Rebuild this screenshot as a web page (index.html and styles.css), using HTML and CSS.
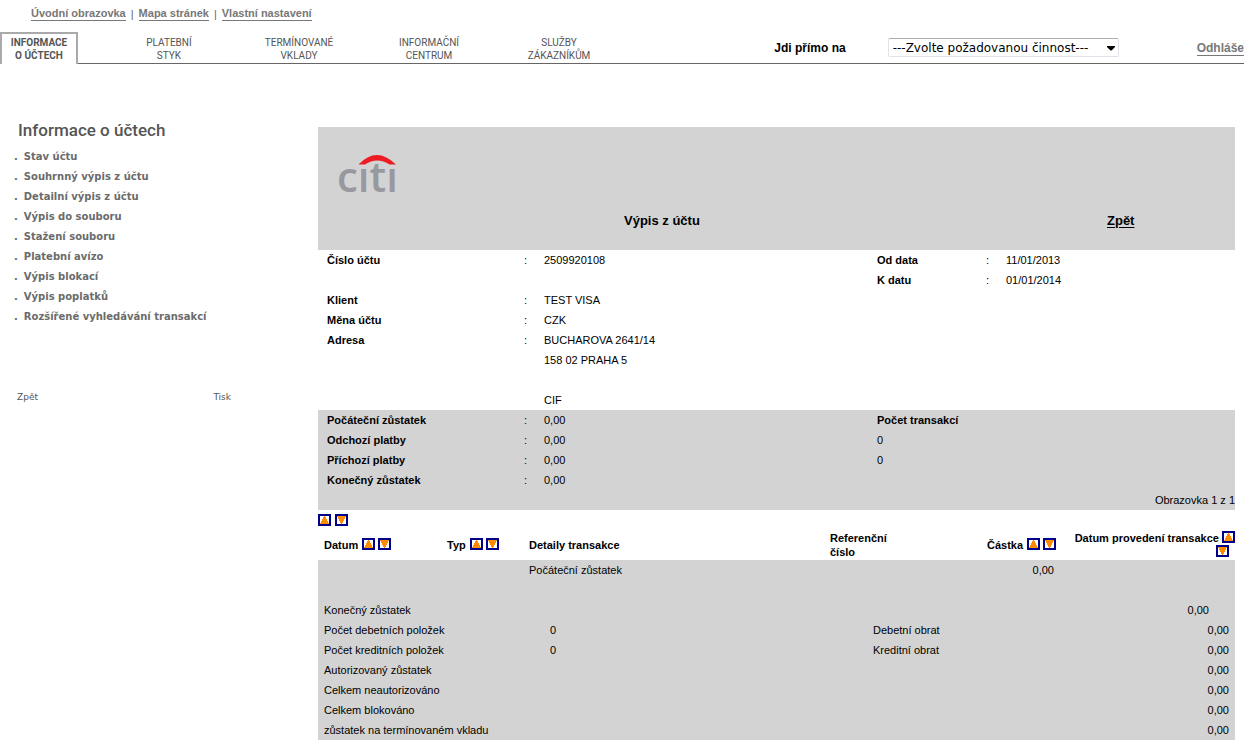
FILE: index.html
```html
<!DOCTYPE html>
<html lang="cs">
<head>
<meta charset="utf-8">
<title>Výpis z účtu</title>
<link rel="stylesheet" href="styles.css">
</head>
<body>
<svg class="defs" aria-hidden="true">
  <symbol id="up" viewBox="0 0 9 8"><path d="M4 0h1v1h1v2h1v2h1v2h1v1H0V7h1V5h1V3h1V1h1z"/></symbol>
  <symbol id="down" viewBox="0 0 9 8"><path d="M0 0h9v1H8v2H7v2H6v2H5v1H4V7H3V5H2V3H1V1H0z"/></symbol>
</svg>
<div class="quick-links"><a href="#">Úvodní obrazovka</a> | <a href="#">Mapa stránek</a> | <a href="#">Vlastní nastavení</a></div>
<header class="header">
  <nav class="tabs">
    <a class="tab tab-active" href="#">INFORMACE<br>O ÚČTECH</a>
    <a class="tab" href="#">PLATEBNÍ<br>STYK</a>
    <a class="tab" href="#">TERMÍNOVANÉ<br>VKLADY</a>
    <a class="tab" href="#">INFORMAČNÍ<br>CENTRUM</a>
    <a class="tab" href="#">SLUŽBY<br>ZÁKAZNÍKŮM</a>
  </nav>
  <div class="tools">
    <label for="jump">Jdi přímo na</label>
    <div class="select-wrap">
      <select id="jump" class="jump"><option>---Zvolte požadovanou činnost---</option></select>
      <svg class="caret" width="8" height="5" viewBox="0 0 8 5" aria-hidden="true"><path d="M0 0h8v1L4.500 4.500h-1L0 1z"/></svg>
    </div>
    <a class="logout" href="#">Odhláše</a>
  </div>
</header>
<div class="page">
  <aside class="sidebar">
    <h1 class="side-title">Informace o účtech</h1>
    <ul class="menu">
      <li><a href="#">Stav účtu</a></li>
      <li><a href="#">Souhrnný výpis z účtu</a></li>
      <li><a href="#">Detailní výpis z účtu</a></li>
      <li><a href="#">Výpis do souboru</a></li>
      <li><a href="#">Stažení souboru</a></li>
      <li><a href="#">Platební avízo</a></li>
      <li><a href="#">Výpis blokací</a></li>
      <li><a href="#">Výpis poplatků</a></li>
      <li><a href="#">Rozšířené vyhledávání transakcí</a></li>
    </ul>
    <div class="side-actions"><a href="#">Zpět</a><a href="#">Tisk</a></div>
  </aside>
  <main class="statement">
    <div class="banner">
      <svg class="logo" width="64" height="40" viewBox="0 0 64 40" role="img" aria-label="citi">
        <path class="logo-arc" d="M22.500 10.500Q40.500-8.500 60 10.500H53.500Q41 2.500 29 10.500z"/>
        <text class="logo-text" x="1" y="38">cıtı</text>
      </svg>
      <div class="banner-row">
        <h2 class="banner-title">Výpis z účtu</h2>
        <a class="back" href="#">Zpět</a>
      </div>
    </div>
    <table class="info">
      <colgroup><col class="c-label"><col class="c-colon"><col><col class="c-label2"><col class="c-colon"><col class="c-value2"></colgroup>
      <tr><th>Číslo účtu</th><td>:</td><td>2509920108</td><th>Od data</th><td>:</td><td>11/01/2013</td></tr>
      <tr><th></th><td></td><td></td><th>K datu</th><td>:</td><td>01/01/2014</td></tr>
      <tr><th>Klient</th><td>:</td><td>TEST VISA</td><td></td><td></td><td></td></tr>
      <tr><th>Měna účtu</th><td>:</td><td>CZK</td><td></td><td></td><td></td></tr>
      <tr><th>Adresa</th><td>:</td><td>BUCHAROVA 2641/14</td><td></td><td></td><td></td></tr>
      <tr><th></th><td></td><td>158 02 PRAHA 5</td><td></td><td></td><td></td></tr>
      <tr><th></th><td></td><td></td><td></td><td></td><td></td></tr>
      <tr><th></th><td></td><td>CIF</td><td></td><td></td><td></td></tr>
    </table>
    <table class="info shaded">
      <colgroup><col class="c-label"><col class="c-colon"><col><col class="c-label2"><col class="c-colon"><col class="c-value2"></colgroup>
      <tr><th>Počáteční zůstatek</th><td>:</td><td>0,00</td><th>Počet transakcí</th><td></td><td></td></tr>
      <tr><th>Odchozí platby</th><td>:</td><td>0,00</td><td>0</td><td></td><td></td></tr>
      <tr><th>Příchozí platby</th><td>:</td><td>0,00</td><td>0</td><td></td><td></td></tr>
      <tr><th>Konečný zůstatek</th><td>:</td><td>0,00</td><td></td><td></td><td></td></tr>
      <tr><td class="right" colspan="6">Obrazovka 1 z 1</td></tr>
    </table>
    <div class="sort-all">
      <button class="sort" aria-label="Vzestupně"><svg><use href="#up"/></svg></button>
      <button class="sort" aria-label="Sestupně"><svg><use href="#down"/></svg></button>
    </div>
    <table class="moves">
      <colgroup><col class="m-date"><col class="m-type"><col><col class="m-ref"><col class="m-amount"><col class="m-done"></colgroup>
      <thead>
        <tr>
          <th>Datum <button class="sort first" aria-label="Datum vzestupně"><svg><use href="#up"/></svg></button> <button class="sort" aria-label="Datum sestupně"><svg><use href="#down"/></svg></button></th>
          <th>Typ <button class="sort first" aria-label="Typ vzestupně"><svg><use href="#up"/></svg></button> <button class="sort" aria-label="Typ sestupně"><svg><use href="#down"/></svg></button></th>
          <th>Detaily transakce</th>
          <th>Referenční<br>číslo</th>
          <th>Částka <button class="sort first" aria-label="Částka vzestupně"><svg><use href="#up"/></svg></button> <button class="sort" aria-label="Částka sestupně"><svg><use href="#down"/></svg></button></th>
          <th class="done">Datum provedení transakce <button class="sort" aria-label="Datum provedení vzestupně"><svg><use href="#up"/></svg></button><br><button class="sort last" aria-label="Datum provedení sestupně"><svg><use href="#down"/></svg></button></th>
        </tr>
      </thead>
      <tbody class="shaded">
        <tr><td></td><td></td><td>Počáteční zůstatek</td><td></td><td class="amount">0,00</td><td></td></tr>
        <tr><td colspan="6"></td></tr>
      </tbody>
    </table>
    <table class="totals shaded">
      <colgroup><col class="t-label"><col class="t-count"><col><col class="t-turn"><col class="t-value"></colgroup>
      <tr><td>Konečný zůstatek</td><td></td><td></td><td></td><td class="total indent">0,00</td></tr>
      <tr><td>Počet debetních položek</td><td class="count">0</td><td></td><td>Debetní obrat</td><td class="total">0,00</td></tr>
      <tr><td>Počet kreditních položek</td><td class="count">0</td><td></td><td>Kreditní obrat</td><td class="total">0,00</td></tr>
      <tr><td>Autorizovaný zůstatek</td><td></td><td></td><td></td><td class="total">0,00</td></tr>
      <tr><td>Celkem neautorizováno</td><td></td><td></td><td></td><td class="total">0,00</td></tr>
      <tr><td>Celkem blokováno</td><td></td><td></td><td></td><td class="total">0,00</td></tr>
      <tr><td>zůstatek na termínovaném vkladu</td><td></td><td></td><td></td><td class="total">0,00</td></tr>
    </table>
  </main>
</div>
</body>
</html>
```
FILE: styles.css
```css
* { box-sizing: border-box; }
body {
  margin: 0;
  background: #fff;
  color: #000;
  font: 11px/20px "Liberation Sans", Arial, sans-serif;
}
.defs { display: none; }
a { color: inherit; text-decoration: none; }

.quick-links {
  display: flex;
  gap: 5px;
  padding: 4px 0 8px 31px;
  color: #666;
}
.quick-links a, .logout {
  align-self: center;
  border-bottom: 1px solid #777;
  color: #777;
  font-weight: bold;
  line-height: 13px;
}

.header {
  display: flex;
  border-bottom: 1px solid #666;
}
.tabs { display: flex; }
.tab {
  width: 130px;
  padding: 4px 0 1px;
  color: #555;
  font: 10px/13px Roboto, sans-serif;
  text-align: center;
}
.tab-active {
  width: 78px;
  margin: 0 26px -1px 0;
  padding: 2px 0;
  border: 2px solid #aaa;
  border-bottom: 0;
  background: #fff;
  font-weight: bold;
}
.tools {
  display: flex;
  align-items: center;
  margin-left: auto;
  font-size: 12px;
  font-weight: bold;
}
.tools .logout { margin-top: 3px; }
.select-wrap {
  position: relative;
  margin: 0 78px 0 42px;
}
.jump {
  display: block;
  width: 231px;
  height: 19px;
  padding: 0 4px;
  border: 1px solid #e2e3ea;
  border-top-color: #abadb3;
  border-radius: 2px;
  appearance: none;
  background: #fff;
  color: #000;
  font: 12px "DejaVu Sans", sans-serif;
}
.caret {
  position: absolute;
  top: 8px;
  right: 4px;
}

.page {
  display: flex;
  padding: 56px 9px 0 0;
}
.sidebar { width: 318px; flex: none; }
.side-title {
  margin: 0 0 7px 18px;
  color: #555;
  font: 500 17px/20px Roboto, sans-serif;
}
.menu {
  margin: 0 0 60px;
  padding: 0 0 0 14px;
  list-style: none;
  color: #6b6b6b;
  font: bold 10px/20px "DejaVu Sans", sans-serif;
}
.menu li { display: flex; gap: 6px; }
.menu li::before { content: "."; }
.side-actions {
  display: flex;
  justify-content: space-between;
  padding: 0 87px 0 17px;
  color: #555;
  font: 9px/20px "DejaVu Sans", sans-serif;
}

.statement {
  flex: 1;
  margin-top: 7px;
}
.banner {
  padding: 27px 0 19px;
  background: #d3d3d3;
}
.logo { display: block; margin-left: 18px; overflow: visible; }
.logo-arc { fill: #ed1c24; }
.logo-text { fill: #98989f; font: 600 42px "Open Sans", sans-serif; }
.banner-row {
  display: grid;
  grid-template-columns: 306px 1fr 128px;
  margin-top: 17px;
}
.banner-title, .back {
  margin: 0;
  font-size: 13px;
  font-weight: bold;
  line-height: 20px;
}
.banner-title { grid-column: 2; }
.back { text-decoration: underline; text-underline-offset: 2px; }

table {
  width: 100%;
  border-collapse: collapse;
  table-layout: fixed;
}
th, td {
  height: 20px;
  padding: 0;
  text-align: left;
  white-space: nowrap;
}
.shaded { background: #d3d3d3; }
.info th:first-child { padding-left: 9px; }
.c-label { width: 206px; }
.c-colon { width: 20px; }
.c-label2 { width: 109px; }
.c-value2 { width: 229px; }
.info .right { text-align: right; }

.sort {
  width: 13px;
  height: 12px;
  padding: 0;
  border: 2px solid #00008b;
  background: #fff;
}
.sort svg {
  display: block;
  width: 9px;
  height: 8px;
  fill: #ff8c00;
}
.sort-all {
  display: flex;
  gap: 4px;
  height: 20px;
  align-items: center;
}
.moves th { height: 30px; line-height: 14px; }
.moves th .sort { vertical-align: 1px; }
.moves .first { margin-left: 1px; }
.moves th:first-child, .totals td:first-child { padding-left: 6px; }
.m-date { width: 129px; }
.m-type { width: 82px; }
.m-ref { width: 157px; }
.m-amount { width: 72px; }
.m-done { width: 176px; }
.moves .done { text-align: right; }
.moves .last { margin-right: 6px; }
.moves .amount { padding-right: 5px; text-align: right; }

.t-label { width: 206px; }
.t-count { width: 58px; }
.t-turn { width: 200px; }
.t-value { width: 162px; }
.totals .count { text-align: center; }
.totals .total { padding-right: 6px; text-align: right; }
.totals .indent { padding-right: 26px; }
```
